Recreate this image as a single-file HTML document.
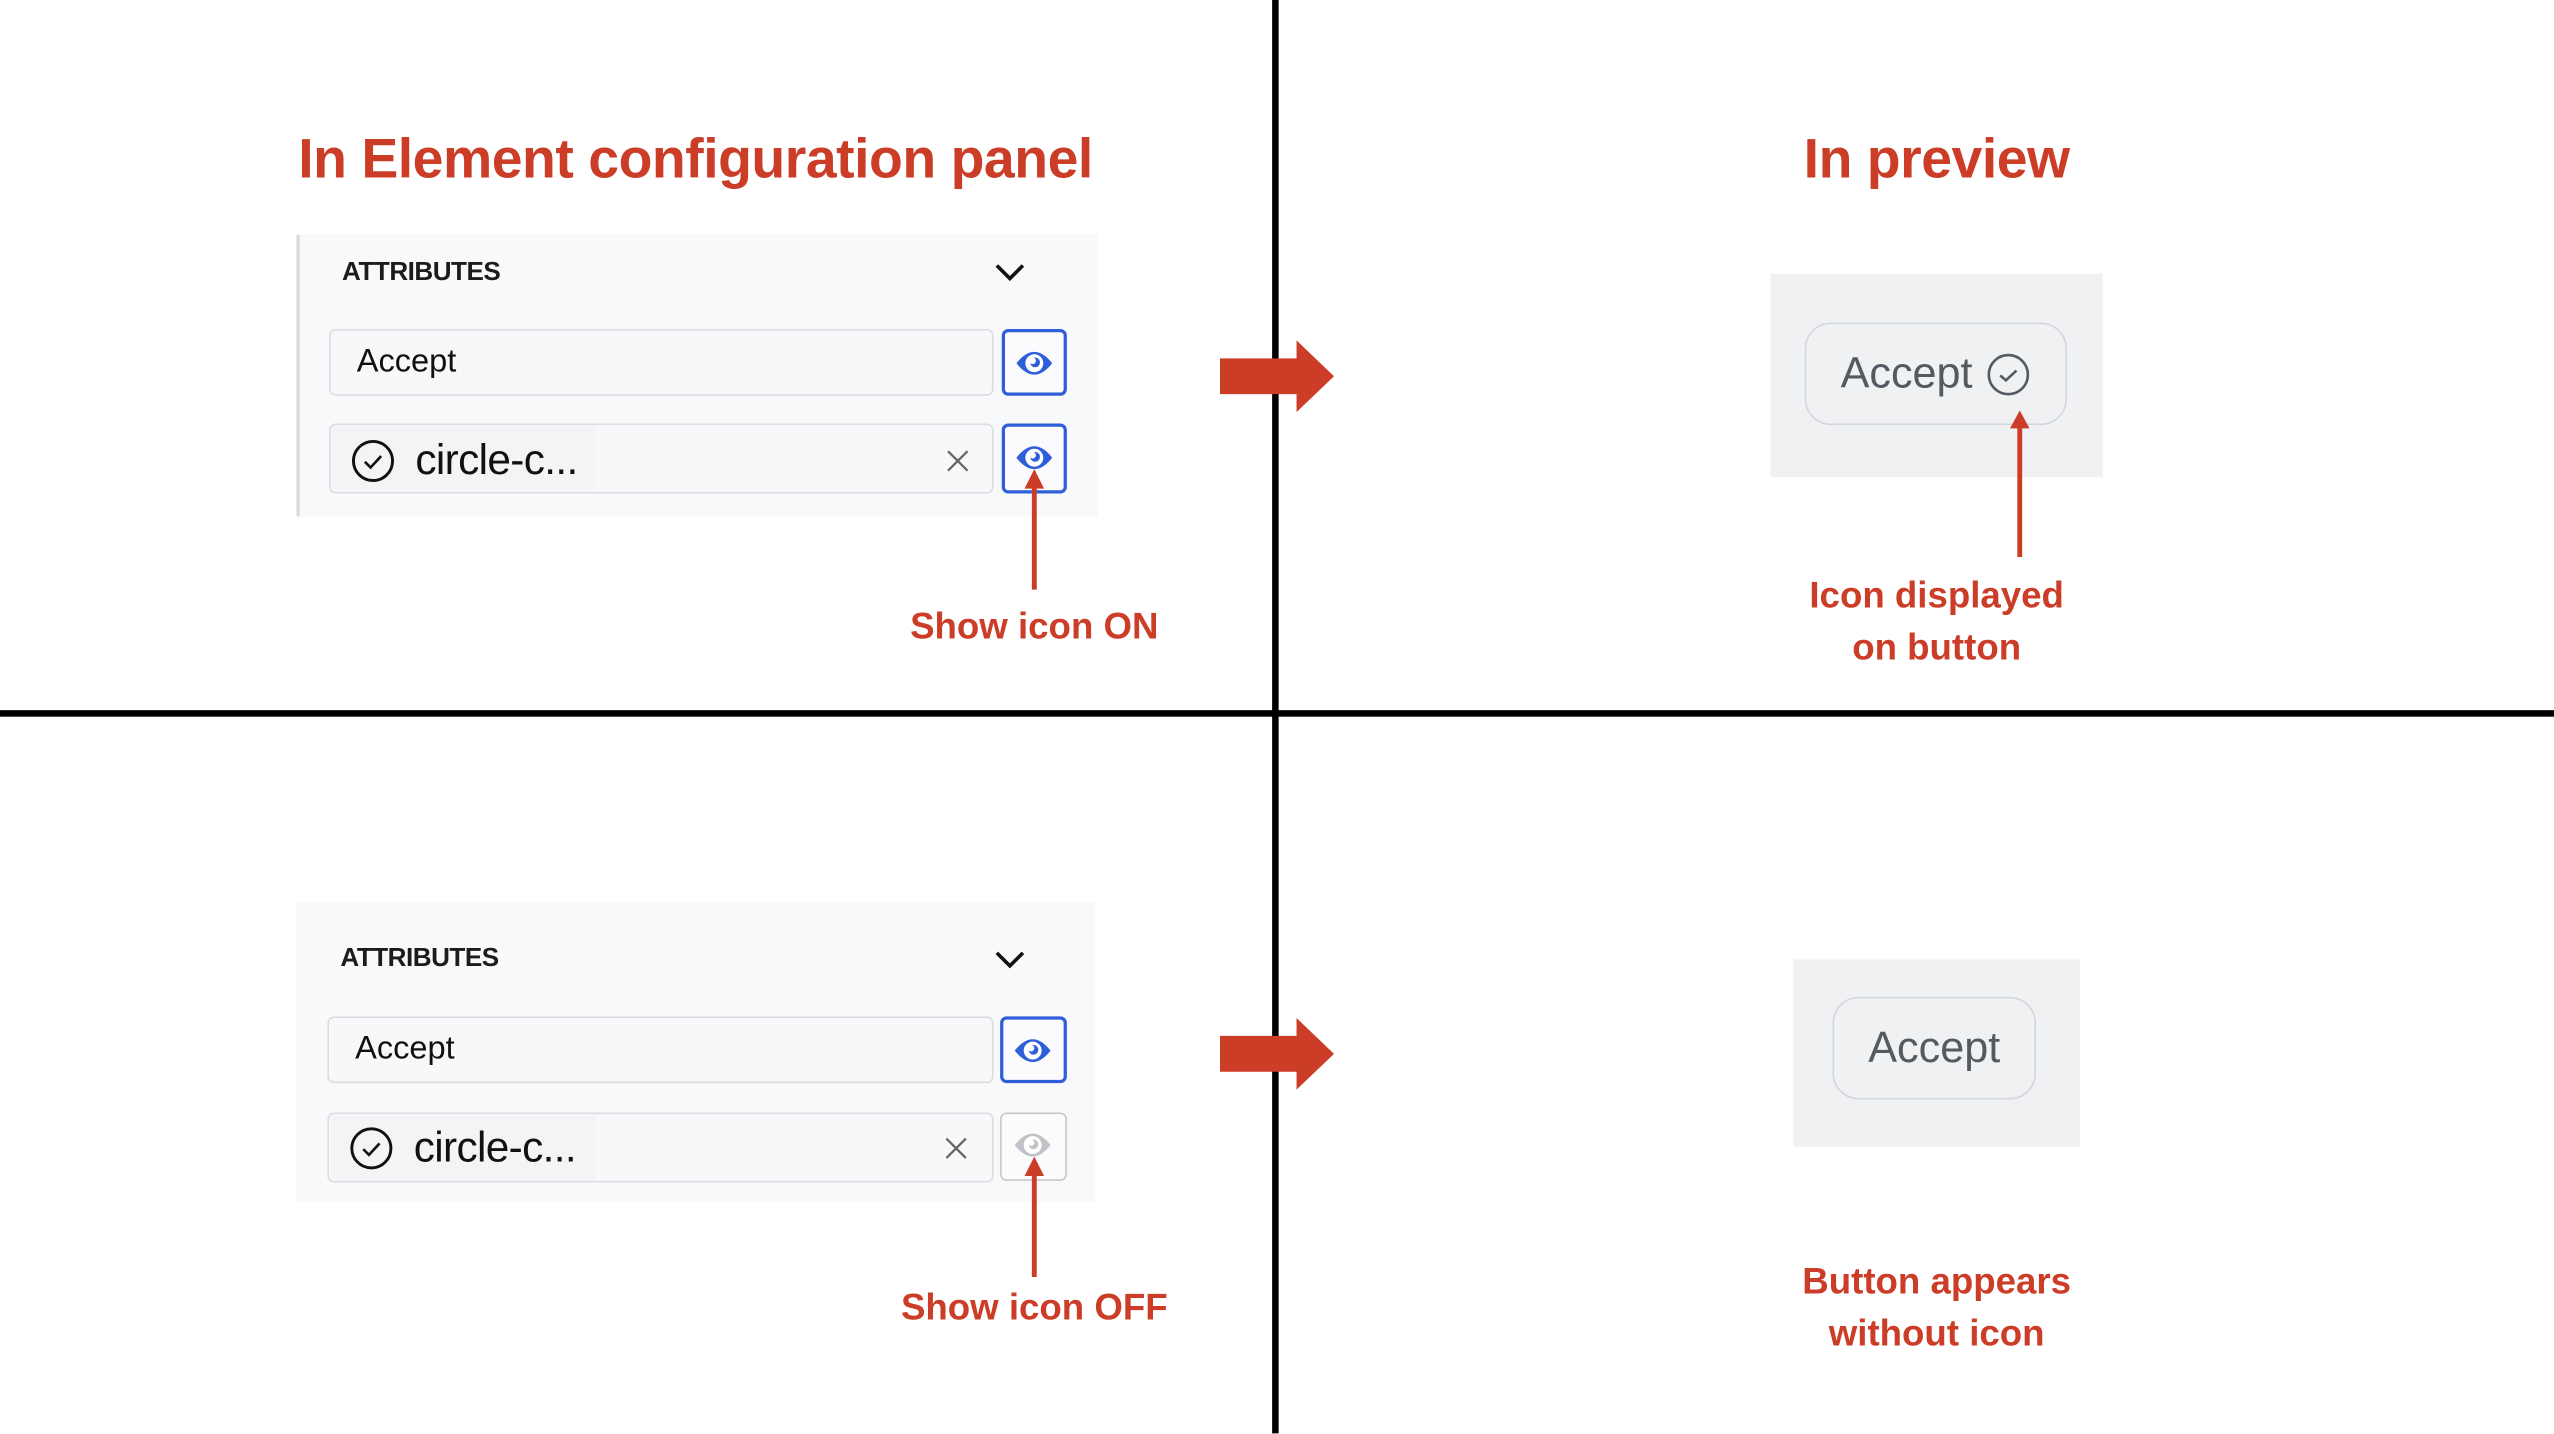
<!DOCTYPE html>
<html><head><meta charset="utf-8"><style>
html,body{margin:0;padding:0;background:#fff;width:2554px;height:1434px;overflow:hidden}
#s{position:absolute;left:0;top:0;width:1568px;height:880px;transform:scale(1.62883);transform-origin:0 0;font-family:"Liberation Sans",sans-serif}
.a{position:absolute}
.t{color:#cc3d28;font-weight:bold;text-align:center;white-space:nowrap}
.panel{background:#f8f9fa}
.hdr{font-size:16px;font-weight:bold;color:#1c1c1c;letter-spacing:-0.3px}
.inp{background:#f7f8fa;border:1.5px solid #dcdde0;border-radius:4px;box-sizing:border-box}
.eye{border:2px solid #2e5fd8;border-radius:4px;box-sizing:border-box;background:#fbfbfd}
.eyeoff{border:1.5px solid #c5c8cc;border-radius:4px;box-sizing:border-box;background:#fbfbfc}
</style></head><body><div id="s">
<div class="a" style="left:781px;top:0;width:4px;height:880px;background:#000"></div>
<div class="a" style="left:0;top:436px;width:1568px;height:4px;background:#000"></div>

<div class="a t" style="left:77px;top:79px;width:700px;font-size:34px;letter-spacing:-0.3px">In Element configuration panel</div>
<div class="a t" style="left:1039px;top:79px;width:300px;font-size:34px;letter-spacing:-0.3px">In preview</div>

<div class="a panel" style="left:182px;top:144px;width:490px;height:173px;border-left:2px solid #d8dadd"></div>
<div class="a hdr" style="left:210px;top:159px">ATTRIBUTES</div>
<svg class="a" style="left:610px;top:160px" width="20" height="14"><path d="M2 3 L10 11 L18 3" fill="none" stroke="#111" stroke-width="2.2"/></svg>
<div class="a inp" style="left:202px;top:202px;width:408px;height:41px"></div>
<div class="a" style="left:219px;top:211px;font-size:20px;color:#111">Accept</div>
<div class="a eye" style="left:615px;top:202px;width:40px;height:41px"></div>
<svg class="a" style="left:622px;top:210px" width="26" height="26"><path d="M2 13 Q13 -1 24 13 Q13 27 2 13Z" fill="#2e5fd8"/><circle cx="13" cy="13" r="5.5" fill="#fff"/><circle cx="13.5" cy="12.5" r="3" fill="#2e5fd8"/><circle cx="12" cy="11.5" r="2" fill="#fff"/></svg>
<div class="a inp" style="left:202px;top:260px;width:408px;height:43px"></div>
<div class="a" style="left:204px;top:262px;width:162px;height:39px;background:#f3f4f6"></div>
<svg class="a" style="left:215px;top:269px" width="28" height="28"><circle cx="14" cy="14" r="12" fill="none" stroke="#111" stroke-width="1.8"/><path d="M9 14.5 L12.5 18 L19 11" fill="none" stroke="#111" stroke-width="1.6"/></svg>
<div class="a" style="left:255px;top:267px;font-size:26px;color:#111;letter-spacing:-0.4px">circle-c...</div>
<svg class="a" style="left:580px;top:275px" width="16" height="16"><path d="M2 2 L14 14 M14 2 L2 14" stroke="#666" stroke-width="1.4"/></svg>
<div class="a eye" style="left:615px;top:260px;width:40px;height:43px"></div>
<svg class="a" style="left:622px;top:268px" width="26" height="26"><path d="M2 13 Q13 -1 24 13 Q13 27 2 13Z" fill="#2e5fd8"/><circle cx="13" cy="13" r="5.5" fill="#fff"/><circle cx="13.5" cy="12.5" r="3" fill="#2e5fd8"/><circle cx="12" cy="11.5" r="2" fill="#fff"/></svg>
<svg class="a" style="left:626px;top:286px" width="18" height="78"><path d="M9 2 L3 14 L15 14Z" fill="#cc3d28"/><rect x="7.5" y="12" width="3" height="64" fill="#cc3d28"/></svg>
<div class="a t" style="left:535px;top:372px;width:200px;font-size:22.5px">Show icon ON</div>

<svg class="a" style="left:749px;top:208px" width="72" height="46"><path d="M0 12 L47 12 L47 1 L70 23 L47 45 L47 34 L0 34Z" fill="#cc3d28"/></svg>

<div class="a" style="left:1087px;top:168px;width:204px;height:125px;background:#f0f1f3"></div>
<div class="a" style="left:1108px;top:198px;width:161px;height:63px;border:1.5px solid #d3d6db;border-radius:16px;box-sizing:border-box"></div>
<div class="a" style="left:1130px;top:214px;font-size:26.5px;color:#545a61">Accept</div>
<svg class="a" style="left:1219px;top:216px" width="28" height="28"><circle cx="14" cy="14" r="12" fill="none" stroke="#545a61" stroke-width="1.6"/><path d="M9 14.5 L12.5 17.5 L19 11.5" fill="none" stroke="#545a61" stroke-width="1.6"/></svg>
<svg class="a" style="left:1231px;top:250px" width="18" height="94"><path d="M9 2 L3 13 L15 13Z" fill="#cc3d28"/><rect x="7.5" y="11" width="3" height="81" fill="#cc3d28"/></svg>
<div class="a t" style="left:1039px;top:350px;width:300px;font-size:22.5px;line-height:32px">Icon displayed<br>on button</div>

<div class="a panel" style="left:182px;top:554px;width:490px;height:184px"></div>
<div class="a hdr" style="left:209px;top:580px">ATTRIBUTES</div>
<svg class="a" style="left:610px;top:582px" width="20" height="14"><path d="M2 3 L10 11 L18 3" fill="none" stroke="#111" stroke-width="2.2"/></svg>
<div class="a inp" style="left:201px;top:624px;width:409px;height:41px"></div>
<div class="a" style="left:218px;top:633px;font-size:20px;color:#111">Accept</div>
<div class="a eye" style="left:614px;top:624px;width:41px;height:41px"></div>
<svg class="a" style="left:621px;top:632px" width="26" height="26"><path d="M2 13 Q13 -1 24 13 Q13 27 2 13Z" fill="#2e5fd8"/><circle cx="13" cy="13" r="5.5" fill="#fff"/><circle cx="13.5" cy="12.5" r="3" fill="#2e5fd8"/><circle cx="12" cy="11.5" r="2" fill="#fff"/></svg>
<div class="a inp" style="left:201px;top:683px;width:409px;height:43px"></div>
<div class="a" style="left:203px;top:685px;width:163px;height:39px;background:#f3f4f6"></div>
<svg class="a" style="left:214px;top:691px" width="28" height="28"><circle cx="14" cy="14" r="12" fill="none" stroke="#111" stroke-width="1.8"/><path d="M9 14.5 L12.5 18 L19 11" fill="none" stroke="#111" stroke-width="1.6"/></svg>
<div class="a" style="left:254px;top:689px;font-size:26px;color:#111;letter-spacing:-0.4px">circle-c...</div>
<svg class="a" style="left:579px;top:697px" width="16" height="16"><path d="M2 2 L14 14 M14 2 L2 14" stroke="#666" stroke-width="1.4"/></svg>
<div class="a eyeoff" style="left:614px;top:683px;width:41px;height:42px"></div>
<svg class="a" style="left:621px;top:690px" width="26" height="26"><path d="M2 13 Q13 -1 24 13 Q13 27 2 13Z" fill="#bfc3c7"/><circle cx="13" cy="13" r="5.5" fill="#fff"/><circle cx="13.5" cy="12.5" r="3" fill="#bfc3c7"/><circle cx="12" cy="11.5" r="2" fill="#fff"/></svg>
<svg class="a" style="left:626px;top:708px" width="18" height="78"><path d="M9 2 L3 14 L15 14Z" fill="#cc3d28"/><rect x="7.5" y="12" width="3" height="64" fill="#cc3d28"/></svg>
<div class="a t" style="left:535px;top:790px;width:200px;font-size:22.5px">Show icon OFF</div>

<svg class="a" style="left:749px;top:624px" width="72" height="46"><path d="M0 12 L47 12 L47 1 L70 23 L47 45 L47 34 L0 34Z" fill="#cc3d28"/></svg>

<div class="a" style="left:1101px;top:589px;width:176px;height:115px;background:#f0f1f3"></div>
<div class="a" style="left:1125px;top:612px;width:125px;height:63px;border:1.5px solid #d3d6db;border-radius:16px;box-sizing:border-box"></div>
<div class="a" style="left:1125px;top:628px;width:125px;text-align:center;font-size:26.5px;color:#545a61">Accept</div>
<div class="a t" style="left:1039px;top:771px;width:300px;font-size:22.5px;line-height:32px">Button appears<br>without icon</div>
</div></body></html>
